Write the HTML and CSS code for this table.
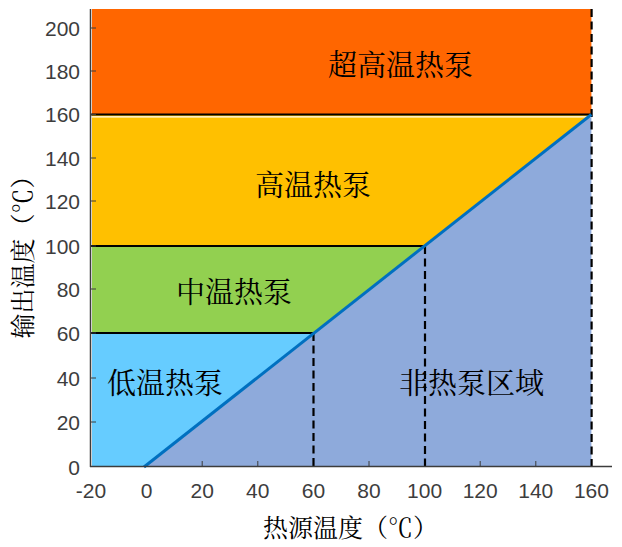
FILE: index.html
```html
<!DOCTYPE html>
<html lang="zh">
<head>
<meta charset="utf-8">
<title>热泵分区图</title>
<link rel="stylesheet" href="styles.css">
</head>
<body>
<div class="figure">
<svg class="chart" width="622" height="547" viewBox="0 0 622 547" xmlns="http://www.w3.org/2000/svg">
  <!-- regions -->
  <rect class="r-super" x="92" y="9" width="499.4" height="105.5"/>
  <polygon class="r-high" points="92,114.5 591.4,114.5 424.5,246 92,246"/>
  <polygon class="r-mid" points="92,246 424.5,246 314,333 92,333"/>
  <polygon class="r-low" points="92,333 314,333 144,467 92,467"/>
  <polygon class="r-none" points="144,467 591.4,114.5 591.4,467"/>

  <!-- boundary lines -->
  <line class="sep-white" x1="92" y1="116.8" x2="591" y2="116.8"/>
  <line class="sep" x1="91" y1="114.5" x2="591.4" y2="114.5"/>
  <line class="sep" x1="91" y1="246" x2="424.5" y2="246"/>
  <line class="sep" x1="91" y1="333" x2="314" y2="333"/>

  <line class="dash" x1="313.5" y1="333" x2="313.5" y2="467"/>
  <line class="dash" x1="425" y1="246" x2="425" y2="467"/>
  <line class="dash" x1="591.6" y1="9" x2="591.6" y2="467"/>

  <line class="diag" x1="144" y1="467" x2="591.4" y2="114.5"/>

  <!-- axes -->
  <line class="axis" x1="90.5" y1="9" x2="90.5" y2="467"/>
  <line class="axis" x1="90" y1="466.5" x2="612" y2="466.5"/>

  <g class="ticks">
    <line x1="91" y1="422" x2="96" y2="422"/>
    <line x1="91" y1="378" x2="96" y2="378"/>
    <line x1="91" y1="333" x2="96" y2="333"/>
    <line x1="91" y1="289" x2="96" y2="289"/>
    <line x1="91" y1="246" x2="96" y2="246"/>
    <line x1="91" y1="201" x2="96" y2="201"/>
    <line x1="91" y1="158" x2="96" y2="158"/>
    <line x1="91" y1="114.5" x2="96" y2="114.5"/>
    <line x1="91" y1="71" x2="96" y2="71"/>
    <line x1="91" y1="28" x2="96" y2="28"/>
    <line x1="202.2" y1="466" x2="202.2" y2="461"/>
    <line x1="257.8" y1="466" x2="257.8" y2="461"/>
    <line x1="369" y1="466" x2="369" y2="461"/>
    <line x1="480.2" y1="466" x2="480.2" y2="461"/>
    <line x1="535.8" y1="466" x2="535.8" y2="461"/>
  </g>

  <g class="ylabels">
    <text x="80" y="467">0</text>
    <text x="80" y="422">20</text>
    <text x="80" y="378">40</text>
    <text x="80" y="333">60</text>
    <text x="80" y="289">80</text>
    <text x="80" y="246">100</text>
    <text x="80" y="201">120</text>
    <text x="80" y="158">140</text>
    <text x="80" y="114.5">160</text>
    <text x="80" y="71">180</text>
    <text x="80" y="28">200</text>
  </g>

  <g class="xlabels">
    <text x="91" y="498">-20</text>
    <text x="146.6" y="498">0</text>
    <text x="202.2" y="498">20</text>
    <text x="257.8" y="498">40</text>
    <text x="313.4" y="498">60</text>
    <text x="369" y="498">80</text>
    <text x="424.6" y="498">100</text>
    <text x="480.2" y="498">120</text>
    <text x="535.8" y="498">140</text>
    <text x="591.4" y="498">160</text>
  </g>

  <g class="zone">
    <text x="328" y="63">超高温热泵</text>
    <text x="255" y="183">高温热泵</text>
    <text x="176" y="290">中温热泵</text>
    <text x="107" y="381">低温热泵</text>
    <text x="399" y="381">非热泵区域</text>
  </g>

  <text class="title" x="263" y="526">热源温度（℃）</text>
  <text class="title ytitle" x="0" y="0" transform="translate(21 251) rotate(-90)">输出温度（℃）</text>
</svg>
</div>
</body>
</html>
```

FILE: styles.css
```css
html, body {
  margin: 0;
  padding: 0;
  background: #ffffff;
}

.figure {
  width: 622px;
  height: 547px;
  overflow: hidden;
}

.chart {
  display: block;
}

.r-super { fill: #ff6600; }
.r-high { fill: #ffc000; }
.r-mid { fill: #92d050; }
.r-low { fill: #66ccff; }
.r-none { fill: #8eaadb; }

.sep {
  stroke: #000000;
  stroke-width: 2.2;
}

.sep-white {
  stroke: #ffffff;
  stroke-width: 1.2;
}

.dash {
  stroke: #000000;
  stroke-width: 2.2;
  stroke-dasharray: 8 4.5;
}

.diag {
  stroke: #0070c0;
  stroke-width: 3;
}

.axis {
  stroke: #3c3c3c;
  stroke-width: 1.5;
}

.ticks line {
  stroke: #3c3c3c;
  stroke-width: 1;
}

.ylabels text,
.xlabels text {
  font-family: "Liberation Sans", Arial, sans-serif;
  font-size: 21px;
  fill: #3d3d3d;
}

.ylabels text {
  text-anchor: end;
  dominant-baseline: central;
}

.xlabels text {
  text-anchor: middle;
}

.zone text {
  font-family: "Noto Serif CJK SC", "Noto Sans CJK SC", serif;
  font-size: 29px;
  fill: #000000;
  dominant-baseline: central;
}

.title {
  font-family: "Noto Serif CJK SC", "Noto Sans CJK SC", serif;
  font-size: 25px;
  fill: #000000;
  dominant-baseline: central;
}

.ytitle {
  text-anchor: middle;
}
```
